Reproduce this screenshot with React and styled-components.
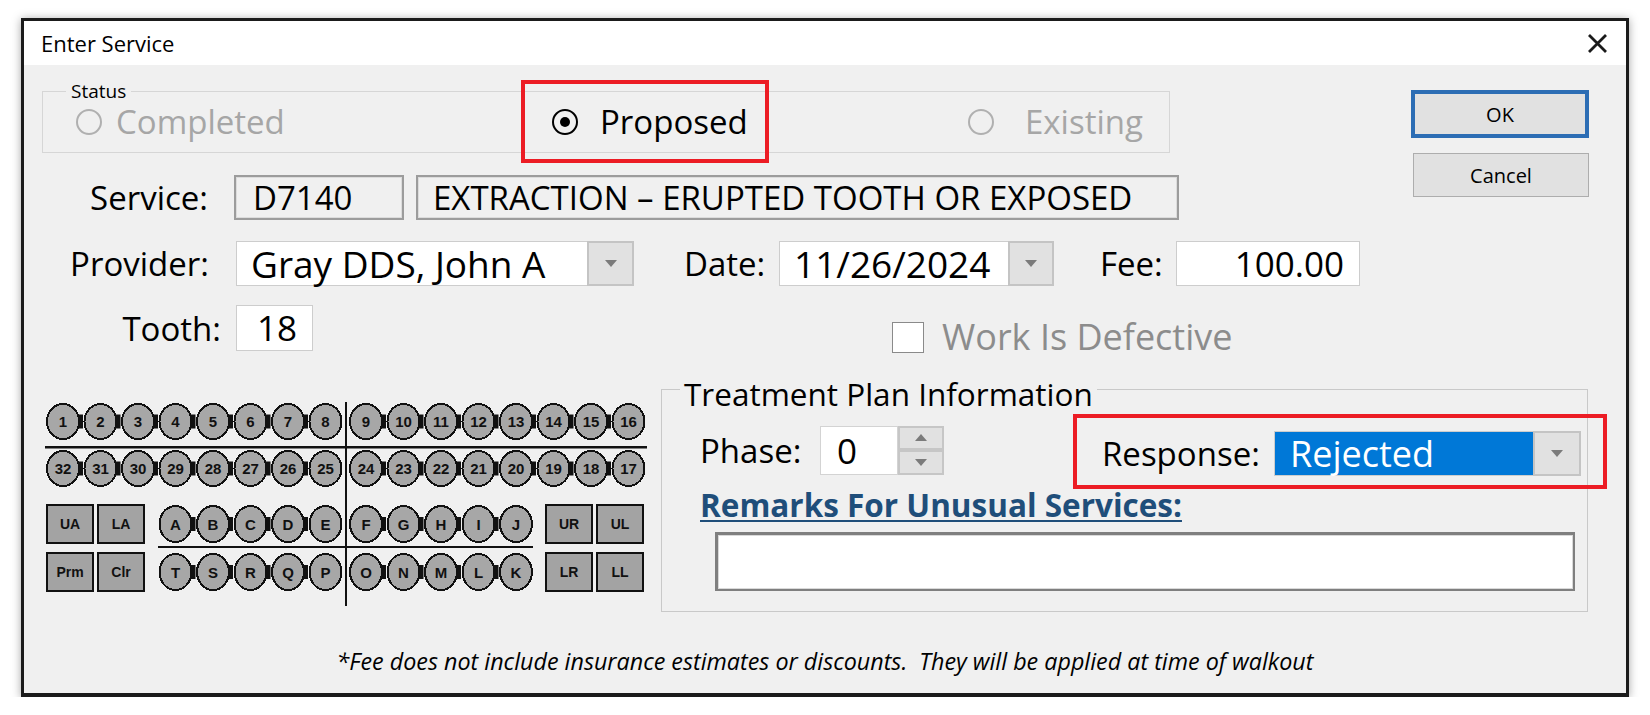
import React from "react";
import styled, { createGlobalStyle } from "styled-components";

const GlobalStyle = createGlobalStyle`
  body {
    margin: 0;
    background: #ffffff;
    font-family: "Open Sans", "Noto Sans", sans-serif;
    color: #000;
  }
`;

const Page = styled.div`
  padding: 18px 0 0 21px;
`;

const Window = styled.div`
  box-sizing: border-box;
  width: 1608px;
  height: 679px;
  border: 3px solid #1b1b1b;
  border-bottom-width: 4px;
  background: #f0f0f0;
  box-shadow: 0 1px 9px rgba(0, 0, 0, 0.35);
  display: flex;
  flex-direction: column;
`;

const TitleBar = styled.div`
  flex-shrink: 0;
  height: 44px;
  background: #ffffff;
  display: flex;
  align-items: center;
  justify-content: space-between;
  padding: 0 18px 0 17px;
`;

const Title = styled.span`
  font-size: 22px;
`;

const CloseIcon = styled.svg`
  width: 21px;
  height: 19px;
`;

const Content = styled.div`
  padding: 0 37px 0 18px;
  display: flex;
  flex-direction: column;
`;

const TopSection = styled.div`
  display: flex;
  align-items: flex-start;
`;

const FormColumn = styled.div`
  flex: 1;
  display: flex;
  flex-direction: column;
`;

const ButtonColumn = styled.div`
  width: 178px;
  padding-top: 25px;
  display: flex;
  flex-direction: column;
  align-items: flex-end;
  gap: 15px;
`;

const DialogButton = styled.button`
  box-sizing: border-box;
  width: ${(p) => (p.$primary ? 178 : 176)}px;
  height: ${(p) => (p.$primary ? 48 : 44)}px;
  background: #e1e1e1;
  border: ${(p) => (p.$primary ? "4px solid #2c6db4" : "1px solid #adadad")};
  font-family: "Open Sans", sans-serif;
  font-size: 20px;
  color: #000;
  padding: 0;
`;

const GroupBox = styled.fieldset`
  box-sizing: border-box;
  min-width: 0;
  width: ${(p) => p.$w}px;
  margin: ${(p) => p.$m};
  padding: ${(p) => p.$pad};
  border: 1px solid ${(p) => p.$line};
`;

const GroupLegend = styled.legend`
  font-size: ${(p) => p.$size}px;
  line-height: ${(p) => p.$lh}px;
  padding: ${(p) => p.$pad};
  margin-left: ${(p) => p.$ml}px;
`;

const RadioRow = styled.div`
  height: 40px;
  display: flex;
  align-items: center;
`;

const RadioOption = styled.div`
  position: relative;
  flex-shrink: 0;
  width: ${(p) => p.$w}px;
  display: flex;
  align-items: center;
  gap: ${(p) => p.$gap}px;
  font-size: 33px;
  line-height: 40px;
  color: ${(p) => (p.$on ? "#000" : "#a6a6a6")};
`;

const RadioCircle = styled.span`
  box-sizing: border-box;
  flex-shrink: 0;
  width: 26px;
  height: 26px;
  border-radius: 50%;
  border: 2px solid ${(p) => (p.$on ? "#000" : "#b0b0b0")};
  display: flex;
  align-items: center;
  justify-content: center;

  &::after {
    content: "";
    display: ${(p) => (p.$on ? "block" : "none")};
    width: 10px;
    height: 10px;
    border-radius: 50%;
    background: #000;
  }
`;

const Highlight = styled.div`
  position: absolute;
  box-sizing: border-box;
  left: ${(p) => p.$l}px;
  top: ${(p) => p.$t}px;
  width: ${(p) => p.$w}px;
  height: ${(p) => p.$h}px;
  border: 4px solid #ec1c24;
  pointer-events: none;
`;

const Row = styled.div`
  display: flex;
  align-items: center;
  height: ${(p) => p.$h || 45}px;
  margin-top: ${(p) => p.$mt || 0}px;
`;

const FieldLabel = styled.span`
  box-sizing: border-box;
  flex-shrink: 0;
  width: ${(p) => p.$w}px;
  margin-left: ${(p) => p.$ml || 0}px;
  padding-right: ${(p) => p.$pr || 0}px;
  text-align: ${(p) => p.$align || "left"};
  font-size: 33px;
  white-space: nowrap;
`;

const TextBox = styled.div`
  box-sizing: border-box;
  flex-shrink: 0;
  width: ${(p) => p.$w}px;
  height: ${(p) => p.$h || 45}px;
  margin-left: ${(p) => p.$ml || 0}px;
  display: flex;
  align-items: center;
  justify-content: ${(p) => (p.$right ? "flex-end" : "flex-start")};
  padding: ${(p) => p.$pad || "0 0 0 16px"};
  font-size: ${(p) => p.$size || 35}px;
  line-height: 40px;
  white-space: nowrap;
  background: ${(p) => (p.$readonly ? "#f0f0f0" : "#ffffff")};
  border: ${(p) => (p.$readonly ? "2px solid #9c9c9c" : "1px solid #cdcdcd")};
  box-shadow: ${(p) => (p.$readonly ? "inset 0 0 0 1px #dcdcdc" : "none")};
`;

const Combo = styled.div`
  box-sizing: border-box;
  flex-shrink: 0;
  width: ${(p) => p.$w}px;
  height: 45px;
  display: flex;
  border: 1px solid #cdcdcd;
  background: #ffffff;
`;

const ComboValue = styled.div`
  flex: 1;
  display: flex;
  align-items: center;
  padding-left: ${(p) => p.$pl}px;
  font-size: ${(p) => p.$size || 35}px;
  line-height: 40px;
  white-space: nowrap;
  background: ${(p) => (p.$selected ? "#0078d7" : "#ffffff")};
  color: ${(p) => (p.$selected ? "#ffffff" : "#000")};
`;

const ComboButton = styled.div`
  box-sizing: border-box;
  flex-shrink: 0;
  width: ${(p) => p.$w}px;
  margin: -1px -1px -1px 0;
  background: #e1e1e1;
  border: 2px solid #c4c4c4;
  display: flex;
  align-items: center;
  justify-content: center;
`;

const Arrow = styled.span`
  width: 0;
  height: 0;
  border-left: 6px solid transparent;
  border-right: 6px solid transparent;
  ${(p) =>
    p.$up ? "border-bottom: 7px solid #7b7b7b;" : "border-top: 7px solid #7b7b7b;"}
`;

const CheckGroup = styled.div`
  align-self: flex-start;
  margin: 12px 0 0 ${(p) => p.$ml}px;
  display: flex;
  align-items: center;
  gap: 18px;
  font-size: 36px;
  line-height: 40px;
  color: #8c8c8c;
  white-space: nowrap;
`;

const CheckBox = styled.span`
  box-sizing: border-box;
  width: 32px;
  height: 31px;
  background: #ffffff;
  border: 1px solid #8a8a8a;
`;

const LowerSection = styled.div`
  display: flex;
  align-items: flex-start;
  margin-top: 18px;
`;

const Chart = styled.svg`
  flex-shrink: 0;
  margin: 33px 14px 0 3px;
`;

const Spinner = styled.div`
  display: flex;
  height: 49px;
`;

const SpinInput = styled.div`
  box-sizing: border-box;
  width: 78px;
  height: 49px;
  background: #ffffff;
  border: 1px solid #d3d3d3;
  padding-left: 16px;
  display: flex;
  align-items: center;
  font-size: 35px;
`;

const SpinButtons = styled.div`
  width: 46px;
  display: flex;
  flex-direction: column;
`;

const SpinButton = styled.div`
  box-sizing: border-box;
  flex: 1;
  background: #e1e1e1;
  border: 2px solid #c6c6c6;
  display: flex;
  align-items: center;
  justify-content: center;
`;

const ResponseGroup = styled.div`
  position: relative;
  align-self: flex-start;
  margin: 6px 0 0 158px;
  display: flex;
  align-items: center;
`;

const RemarksArea = styled.div`
  display: flex;
  flex-direction: column;
`;

const RemarksLink = styled.a`
  align-self: flex-start;
  margin-top: 12px;
  font-size: 31.5px;
  line-height: 36px;
  font-weight: 700;
  color: #1f4e7a;
  text-decoration: underline;
  text-decoration-thickness: 2px;
  text-underline-offset: 3px;
`;

const RemarksBox = styled.div`
  box-sizing: border-box;
  width: 860px;
  height: 59px;
  margin: 9px 0 0 15px;
  background: #ffffff;
  border: 2px solid #7f7f7f;
  border-top-width: 3px;
  border-left-width: 3px;
  box-shadow: inset 0 0 0 1px #d9d9d9;
`;

const Footnote = styled.div`
  margin-top: 37px;
  text-align: center;
  font-size: 23.3px;
  line-height: 24px;
  font-style: italic;
  white-space: pre;
`;

const LEFT = [0, 1, 2, 3, 4, 5, 6, 7].map((i) => 1 + i * 37.5);
const RIGHT = [0, 1, 2, 3, 4, 5, 6, 7].map((i) => 304 + i * 37.5);

function ToothRow({ labels, xs, y, h }) {
  const cy = y + h / 2;
  return (
    <g>
      {xs.map((x, i) =>
        i < xs.length - 1 && xs[i + 1] - x < 40 ? (
          <rect key={"c" + i} x={x + 31} y={cy - 7} width={6} height={14} fill="#111" />
        ) : null
      )}
      {xs.map((x, i) => (
        <g key={labels[i]}>
          <ellipse
            cx={x + 17}
            cy={cy}
            rx={16}
            ry={h / 2 - 1}
            fill="#a7a7a7"
            stroke="#111"
            strokeWidth="2"
            shapeRendering="crispEdges"
          />
          <text
            x={x + 17}
            y={cy + 5.5}
            textAnchor="middle"
            fontSize="15"
            fontWeight="700"
            fontFamily="'Liberation Sans', sans-serif"
            fill="#111"
          >
            {labels[i]}
          </text>
        </g>
      ))}
    </g>
  );
}

function ArchKey({ x, y, label }) {
  return (
    <g>
      <rect x={x} y={y} width={46} height={38} fill="#a3a3a3" stroke="#111" strokeWidth="2" />
      <text
        x={x + 23}
        y={y + 24}
        textAnchor="middle"
        fontSize="14"
        fontWeight="700"
        fontFamily="'Liberation Sans', sans-serif"
        fill="#111"
      >
        {label}
      </text>
    </g>
  );
}

function ToothChart() {
  const upper = Array.from({ length: 16 }, (_, i) => String(i + 1));
  const lower = Array.from({ length: 16 }, (_, i) => String(32 - i));
  const perm = [...LEFT, ...RIGHT];
  const prim = [...LEFT.slice(3), ...RIGHT.slice(0, 5)];
  return (
    <Chart width="602" height="205" viewBox="0 0 602 205">
      <ToothRow labels={upper} xs={perm} y={1} h={37} />
      <rect x="0" y="44" width="602" height="2.5" fill="#111" />
      <ToothRow labels={lower} xs={perm} y={48} h={37} />
      <ToothRow labels={["A", "B", "C", "D", "E", "F", "G", "H", "I", "J"]} xs={prim} y={103} h={38} />
      <rect x="113" y="144" width="375" height="2" fill="#111" />
      <ToothRow labels={["T", "S", "R", "Q", "P", "O", "N", "M", "L", "K"]} xs={prim} y={151} h={38} />
      <ArchKey x={2} y={103} label="UA" />
      <ArchKey x={53} y={103} label="LA" />
      <ArchKey x={2} y={151} label="Prm" />
      <ArchKey x={53} y={151} label="Clr" />
      <ArchKey x={501} y={103} label="UR" />
      <ArchKey x={552} y={103} label="UL" />
      <ArchKey x={501} y={151} label="LR" />
      <ArchKey x={552} y={151} label="LL" />
      <rect x="300" y="0" width="2" height="204" fill="#111" />
    </Chart>
  );
}

export default function App() {
  return (
    <Page>
      <GlobalStyle />
      <Window>
        <TitleBar>
          <Title>Enter Service</Title>
          <CloseIcon viewBox="0 0 21 19">
            <path d="M2 1 L19 18 M19 1 L2 18" stroke="#1a1a1a" strokeWidth="2.8" fill="none" />
          </CloseIcon>
        </TitleBar>

        <Content>
          <TopSection>
            <FormColumn>
              <GroupBox $w={1128} $m="15px 0 0" $pad="0 0 10px 33px" $line="#d6d6d6">
                <GroupLegend $size={19} $lh={22} $pad="0 5px" $ml={-10}>
                  Status
                </GroupLegend>
                <RadioRow>
                  <RadioOption $w={476} $gap={14}>
                    <RadioCircle />
                    Completed
                  </RadioOption>
                  <RadioOption $w={416} $gap={22} $on>
                    <RadioCircle $on />
                    Proposed
                    <Highlight $l={-31} $t={-22} $w={248} $h={83} />
                  </RadioOption>
                  <RadioOption $w={200} $gap={31}>
                    <RadioCircle />
                    Existing
                  </RadioOption>
                </RadioRow>
              </GroupBox>

              <Row $mt={22}>
                <FieldLabel $w={192} $pr={26} $align="right">
                  Service:
                </FieldLabel>
                <TextBox $w={170} $readonly $size={33} $pad="0 0 0 17px">
                  D7140
                </TextBox>
                <TextBox $w={763} $ml={12} $readonly $size={33} $pad="0 0 0 15px">
                  EXTRACTION – ERUPTED TOOTH OR EXPOSED
                </TextBox>
              </Row>

              <Row $mt={21}>
                <FieldLabel $w={194} $pr={27} $align="right">
                  Provider:
                </FieldLabel>
                <Combo $w={398}>
                  <ComboValue $pl={14} $size={37}>
                    Gray DDS, John A
                  </ComboValue>
                  <ComboButton $w={47}>
                    <Arrow />
                  </ComboButton>
                </Combo>
                <FieldLabel $w={95} $ml={50}>
                  Date:
                </FieldLabel>
                <Combo $w={275}>
                  <ComboValue $pl={14} $size={37}>
                    11/26/2024
                  </ComboValue>
                  <ComboButton $w={46}>
                    <Arrow />
                  </ComboButton>
                </Combo>
                <FieldLabel $w={76} $ml={46}>
                  Fee:
                </FieldLabel>
                <TextBox $w={184} $right $pad="0 15px 0 0">
                  100.00
                </TextBox>
              </Row>

              <Row $mt={19} $h={46}>
                <FieldLabel $w={194} $pr={15} $align="right">
                  Tooth:
                </FieldLabel>
                <TextBox $w={77} $h={46} $pad="0 0 0 20px">
                  18
                </TextBox>
                <CheckGroup $ml={579}>
                  <CheckBox />
                  Work Is Defective
                </CheckGroup>
              </Row>
            </FormColumn>

            <ButtonColumn>
              <DialogButton $primary>OK</DialogButton>
              <DialogButton>Cancel</DialogButton>
            </ButtonColumn>
          </TopSection>

          <LowerSection>
            <ToothChart />
            <GroupBox $w={927} $m="0" $pad="0 11px 20px 38px" $line="#c9c9c9">
              <GroupLegend $size={31.5} $lh={30} $pad="10px 4px 0" $ml={-20}>
                Treatment Plan Information
              </GroupLegend>
              <Row $mt={16} $h={50}>
                <FieldLabel $w={120}>Phase:</FieldLabel>
                <Spinner>
                  <SpinInput>0</SpinInput>
                  <SpinButtons>
                    <SpinButton>
                      <Arrow $up />
                    </SpinButton>
                    <SpinButton>
                      <Arrow />
                    </SpinButton>
                  </SpinButtons>
                </Spinner>
                <ResponseGroup>
                  <FieldLabel $w={172}>Response:</FieldLabel>
                  <Combo $w={307}>
                    <ComboValue $pl={15} $size={36} $selected>
                      Rejected
                    </ComboValue>
                    <ComboButton $w={48}>
                      <Arrow />
                    </ComboButton>
                  </Combo>
                  <Highlight $l={-29} $t={-17} $w={534} $h={75} />
                </ResponseGroup>
              </Row>
              <RemarksArea>
                <RemarksLink>Remarks For Unusual Services:</RemarksLink>
                <RemarksBox />
              </RemarksArea>
            </GroupBox>
          </LowerSection>
        </Content>

        <Footnote>
          *Fee does not include insurance estimates or discounts.  They will be applied at time of walkout
        </Footnote>
      </Window>
    </Page>
  );
}
